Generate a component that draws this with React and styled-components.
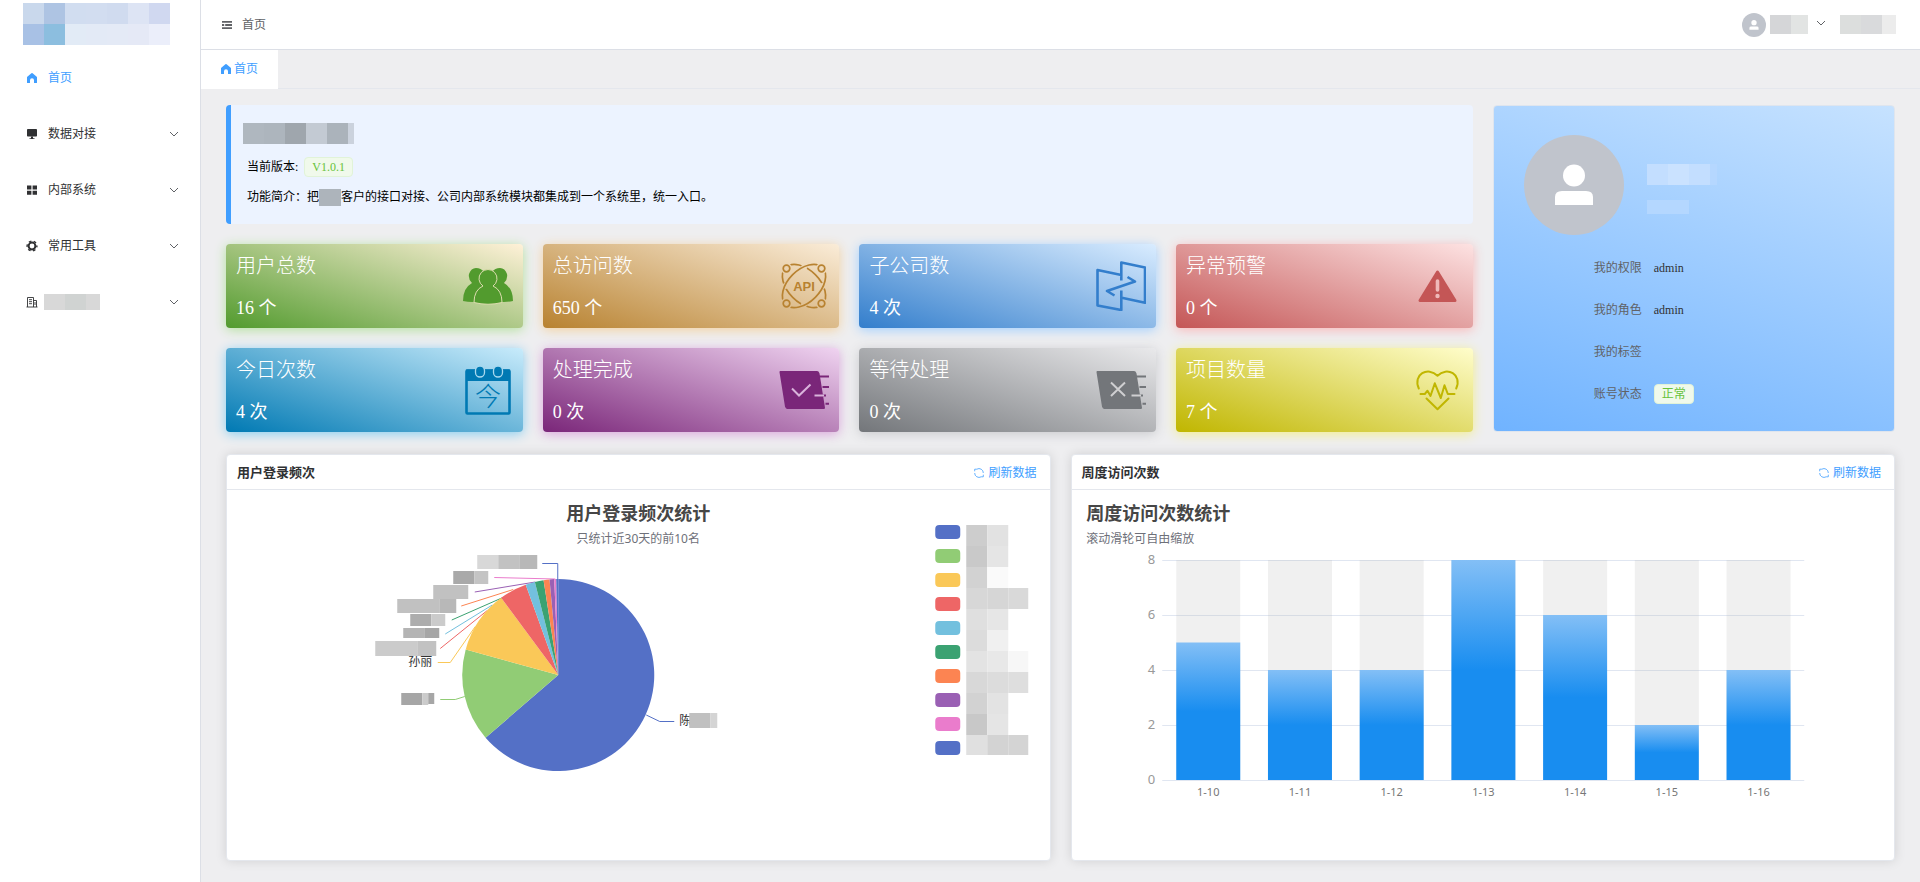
import React from 'react';
import styled, { createGlobalStyle } from 'styled-components';

const GlobalStyle = createGlobalStyle`
  * {
    box-sizing: border-box;
  }
  body {
    margin: 0;
    background: #eeeef0;
    color: #303133;
    font-family: "Liberation Serif", "Noto Sans CJK SC", serif;
    font-size: 12px;
    line-height: 20px;
  }
`;

const StyledLayout = styled.div`
  display: flex;
  min-height: 100vh;
`;

const StyledSidebar = styled.aside`
  flex: 0 0 201px;
  background: #fff;
  border-right: 1px solid #dcdfe6;
`;

const StyledLogo = styled.div`
  display: flex;
  padding: 3px 0 5px 23px;
`;

const StyledMenuItem = styled.a`
  display: flex;
  align-items: center;
  gap: 10px;
  height: 56px;
  padding: 0 20px 0 26px;
  color: ${props => (props.$active ? '#409eff' : '#303133')};
  text-decoration: none;

  svg:nth-child(3) {
    margin-left: auto;
  }
`;

const StyledMenuLabel = styled.span`
  display: flex;
  margin-left: ${props => (props.$masked ? '-4px' : '0')};
`;

const StyledIcon = styled.svg`
  display: block;
  flex: none;
  width: ${props => props.$size || 12}px;
  height: ${props => props.$size || 12}px;
`;

const StyledPage = styled.div`
  flex: 1;
  min-width: 0;
`;

const StyledHeader = styled.header`
  display: flex;
  align-items: center;
  gap: 9px;
  height: 50px;
  padding: 0 24px 0 20px;
  background: #fff;
  border-bottom: 1px solid #dcdfe6;
  color: #606266;
`;

const StyledUser = styled.div`
  display: flex;
  align-items: center;
  gap: 4px;
  margin-left: auto;
`;

const StyledArrow = styled.span`
  padding: 0 9px 4px 3px;
`;

const StyledAvatar = styled.div`
  display: flex;
  flex: none;
  align-items: center;
  justify-content: center;
  width: ${props => props.$size}px;
  height: ${props => props.$size}px;
  border-radius: 50%;
  background: #c0c4cc;
`;

const StyledTabs = styled.nav`
  display: flex;
  height: 39px;
  border-bottom: 1px solid #e4e7ed;
`;

const StyledTab = styled.a`
  display: flex;
  align-items: center;
  gap: 2px;
  height: 39px;
  padding: 0 20px 2px 19px;
  background: #fff;
  color: #409eff;
  text-decoration: none;
`;

const StyledMain = styled.main`
  padding: 16px 25px 21px;
`;

const StyledOverview = styled.div`
  display: grid;
  grid-template-columns: 1fr calc(25% - 15px);
  gap: 20px;
`;

const StyledInfo = styled.section`
  padding: 18px 12px 17px;
  margin-bottom: 20px;
  border-left: 5px solid #409eff;
  border-radius: 4px;
  background: #ecf3ff;
  color: #000;
`;

const StyledInfoName = styled.div`
  display: flex;
`;

const StyledInfoRow = styled.div`
  display: flex;
  align-items: center;
  height: 20px;
  margin: ${props => props.$top}px 0 0 4px;
`;

const StyledTag = styled.span`
  height: 20px;
  padding: 0 7px;
  border: 1px solid #e1f3d8;
  border-radius: 4px;
  background: #f0f9eb;
  color: #67c23a;
  line-height: 18px;

  ${StyledInfoRow} & {
    margin-left: 6px;
  }
`;

const StyledStats = styled.div`
  display: grid;
  grid-template-columns: repeat(4, 1fr);
  gap: 20px;
`;

const StyledStat = styled.section`
  display: flex;
  align-items: center;
  justify-content: space-between;
  height: 84px;
  padding: 0 10px;
  border-radius: 4px;
  background: linear-gradient(18deg, ${props => props.$from}, ${props => props.$to});
  box-shadow: 0 2px 12px ${props => props.$glow};
  color: #fff;
`;

const StyledStatText = styled.div`
  padding-top: 2px;
`;

const StyledStatTitle = styled.h3`
  margin: 0 0 18px;
  font-size: 20px;
  font-weight: 300;
  line-height: 24px;
`;

const StyledStatValue = styled.p`
  margin: 0;
  font-size: 18px;
  line-height: 24px;
`;

const StyledProfile = styled.section`
  padding: 29px 30px 16px;
  border: 1px solid #dfe5ee;
  border-radius: 4px;
  background: linear-gradient(18deg, #70b3ff, #c6e2ff);
`;

const StyledProfileTop = styled.div`
  display: flex;
  align-items: center;
  gap: 23px;
`;

const StyledProfileName = styled.div`
  display: flex;
  flex-direction: column;
  gap: 15px;
  padding-top: 8px;
`;

const StyledProfileList = styled.dl`
  display: grid;
  grid-template-columns: 118px 1fr;
  grid-auto-rows: 42px;
  column-gap: 12px;
  align-items: center;
  margin: 12px 0 0;

  dt {
    color: #606266;
    text-align: right;
  }
  dd {
    display: flex;
    margin: 0;
  }
`;

const StyledCharts = styled.div`
  display: grid;
  grid-template-columns: 1fr 1fr;
  gap: 20px;
  margin-top: 22px;
`;

const StyledPanel = styled.section`
  min-width: 0;
  border: 1px solid #e4e7ed;
  border-radius: 4px;
  background: #fff;
  box-shadow: 0 0 12px rgba(0, 0, 0, 0.12);
`;

const StyledPanelHeader = styled.div`
  display: flex;
  align-items: center;
  justify-content: space-between;
  height: 35px;
  padding: 2px 13px 0 10px;
  border-bottom: 1px solid #e4e7ed;
`;

const StyledPanelTitle = styled.h2`
  margin: 0;
  font-size: 13px;
  font-weight: 700;
`;

const StyledRefresh = styled.button`
  display: flex;
  align-items: center;
  gap: 3px;
  padding: 0;
  border: 0;
  background: none;
  color: #409eff;
  font: inherit;
  cursor: pointer;
`;

const StyledPanelBody = styled.div`
  padding: 10px;
`;

const StyledChart = styled.svg`
  display: block;
  width: 100%;
  height: 350px;
  font-family: "Noto Sans", "Noto Sans CJK SC", sans-serif;
  font-size: 12px;

  .title {
    fill: #464646;
    font-size: 18px;
    font-weight: 700;
  }
  .subtitle {
    fill: #6e7079;
  }
  .value {
    fill: #999;
    font-size: 13px;
    text-anchor: end;
  }
  .day {
    fill: #777;
    font-size: 11px;
    text-anchor: middle;
  }
`;

const StyledMosaic = styled.span`
  display: inline-grid;
  flex: none;
  grid-template-columns: ${props => props.$columns};
  grid-auto-rows: ${props => props.$row}px;
  margin: 0 ${props => props.$margin || 0}px;
`;

const StyledMosaicCell = styled.i`
  background: ${props => props.$color};
`;

const Mosaic = ({ columns, row, colors, margin }) => (
  <StyledMosaic $columns={columns} $row={row} $margin={margin} aria-hidden="true">
    {colors.map((color, index) => (
      <StyledMosaicCell key={index} $color={color} />
    ))}
  </StyledMosaic>
);

const HomeIcon = () => (
  <StyledIcon viewBox="0 0 12 12" fill="currentColor">
    <path d="M5.4 1.3q.6-.5 1.2 0L11 5v5.500q0 .5-.5.5H8V8.200a2 2 0 0 0-4 0V11H1.500Q1 11 1 10.500V5z" />
  </StyledIcon>
);

const MonitorIcon = () => (
  <StyledIcon viewBox="0 0 12 12" fill="currentColor">
    <rect x="1" y="1" width="10" height="7.600" rx="0.800" />
    <path d="M5 8.600h2v1.600h1.500v.8h-5v-.8H5z" />
  </StyledIcon>
);

const MenuIcon = () => (
  <StyledIcon viewBox="0 0 12 12" fill="currentColor">
    <path d="M1 1.500h4.400v4H1zM6.600 1.500H11v4H6.600zM1 6.700h4.400v4H1zM6.600 6.700H11v4H6.600z" />
  </StyledIcon>
);

const ToolIcon = () => (
  <StyledIcon viewBox="0 0 12 12" fill="none" stroke="currentColor">
    <circle cx="6" cy="6" r="3.400" strokeWidth="2" />
    <circle cx="6" cy="6" r="4.900" strokeWidth="1.400" strokeDasharray="2.600 2.530" strokeDashoffset="1.300" />
  </StyledIcon>
);

const OfficeIcon = () => (
  <StyledIcon viewBox="0 0 12 12" fill="none" stroke="currentColor" strokeWidth="0.900">
    <path d="M1.500 11V1.500h6V11M7.500 4.500h3V11M.5 11h11M3 3.700h3M3 5.700h3M3 7.700h3M9 6v3" />
  </StyledIcon>
);

const FoldIcon = () => (
  <StyledIcon viewBox="0 0 12 12" fill="currentColor">
    <path d="M1 2h10v1.800H1zM1 5.100h2.200v1.800H1zM4.200 5.100H11v1.800H4.200zM1 8.200h10V10H1z" />
  </StyledIcon>
);

const ChevronIcon = () => (
  <StyledIcon viewBox="0 0 12 12" fill="none" stroke="#606266">
    <path d="M2 4l4 4 4-4" />
  </StyledIcon>
);

const RefreshIcon = () => (
  <StyledIcon viewBox="0 0 12 12" fill="none" stroke="currentColor" strokeWidth="0.800">
    <path d="M3.800 2.200A4.300 4.300 0 0 1 10.300 6M1.700 6a4.300 4.300 0 0 0 6.500 3.800M1.700 4.300V2.200h2.100M10.300 7.700v2.100H8.200" />
  </StyledIcon>
);

const UserIcon = ({ size }) => (
  <StyledIcon $size={size} viewBox="0 0 50 50" fill="#fff">
    <circle cx="25" cy="15.500" r="11" />
    <path d="M6 45v-8q0-6 7-6h24q7 0 7 6v8z" />
  </StyledIcon>
);

const UsersArt = () => (
  <g fill="#529b2e">
    <path d="M0 40Q0 27 9 22 5 18 6 13q2-6 7-6t8 4L19 40Q9 42 0 40zM50 40q0-13-9-18 4-4 3-9-2-6-7-6t-8 4l2 29q10 2 19 0z" />
    <path
      d="M11 41.500Q11 29 20 25a9 9 0 1 1 10 0q9 4 9 16.500Q25 45 11 41.500z"
      stroke="#dcdcae"
    />
  </g>
);

const ApiArt = () => (
  <g fill="none" stroke="#b88230" strokeWidth="1.700">
    <mask id="api-ends" maskUnits="userSpaceOnUse" x="0" y="0" width="50" height="50">
      <rect width="50" height="50" fill="#fff" stroke="none" />
      <g fill="#000" stroke="none">
        <circle cx="7.500" cy="7.500" r="5.500" />
        <circle cx="42.500" cy="7.500" r="5.500" />
        <circle cx="7.500" cy="42.500" r="5.500" />
        <circle cx="42.500" cy="42.500" r="5.500" />
      </g>
    </mask>
    <mask id="api-cross" maskUnits="userSpaceOnUse" x="0" y="0" width="50" height="50">
      <rect width="50" height="50" fill="#fff" stroke="none" />
      <g fill="#000" stroke="none">
        <circle cx="25" cy="6.500" r="3" />
        <circle cx="25" cy="43.500" r="3" />
        <circle cx="6.500" cy="25" r="3" />
        <circle cx="43.500" cy="25" r="3" />
      </g>
    </mask>
    <g mask="url(#api-ends)">
      <ellipse cx="25" cy="25" rx="26" ry="16" transform="rotate(-45 25 25)" />
      <g mask="url(#api-cross)">
        <ellipse cx="25" cy="25" rx="26" ry="16" transform="rotate(45 25 25)" />
      </g>
    </g>
    <circle cx="7.500" cy="7.500" r="3.300" />
    <circle cx="42.500" cy="7.500" r="3.300" />
    <circle cx="7.500" cy="42.500" r="3.300" />
    <circle cx="42.500" cy="42.500" r="3.300" />
    <text
      x="25"
      y="30"
      fill="#b88230"
      stroke="none"
      textAnchor="middle"
      fontFamily="Liberation Sans, sans-serif"
      fontSize="13"
      fontWeight="700"
    >
      API
    </text>
  </g>
);

const CompanyArt = () => (
  <g fill="none" stroke="#337ecc" strokeWidth="2.600" strokeLinejoin="round">
    <path d="M25.300 14 1.500 9v35.500l23.800 4.500V29.500M25.300 19.500V1.500l23.700 5v35.300l-23.200-5" />
    <path d="M31.500 16l7.500 4.500L11 30l7.500 4.500" />
  </g>
);

const WarningArt = () => (
  <g>
    <path
      d="M24.500 11 7 39.500h35z"
      fill="#c45656"
      stroke="#c45656"
      strokeWidth="3"
      strokeLinejoin="round"
    />
    <path d="M24.500 20v9" stroke="#efb9b9" strokeWidth="3.600" strokeLinecap="round" />
    <circle cx="24.500" cy="35" r="2.200" fill="#efb9b9" />
  </g>
);

const TodayArt = () => (
  <g fill="none" stroke="#0079b3">
    <rect x="3.500" y="5.500" width="43" height="43" rx="1" strokeWidth="2.600" />
    <path d="M3 4.500h44V16H3z" fill="#0079b3" stroke="none" />
    <rect x="12.500" y="1" width="9" height="11" rx="4.500" fill="#0079b3" stroke="#a9d9ef" strokeWidth="1.300" />
    <rect x="30.500" y="1" width="9" height="11" rx="4.500" fill="#0079b3" stroke="#a9d9ef" strokeWidth="1.300" />
    <text
      x="25"
      y="41"
      fill="#0079b3"
      stroke="none"
      textAnchor="middle"
      fontFamily="Noto Sans CJK SC, sans-serif"
      fontSize="26"
      fontWeight="300"
    >
      今
    </text>
  </g>
);

const BookArt = ({ color, light, done }) => (
  <g fill="none" stroke={color} strokeWidth="2">
    <path d="M1.500 7h36.500q1 0 1.500 1.500L45 43H8.500q-1 0-1.500-1.500z" fill={color} strokeLinejoin="round" />
    <path d="M40 11.500h10M43.500 22h6.500M44 30.500h3M46.500 38.700H50" />
    <path d="M35.500 30.500H45" stroke={light} />
    <path d={done ? 'M13 23.500l7 7L31.500 19.500' : 'M15 17.500 29 31M29 17.500 15 31'} stroke={light} />
  </g>
);

const HeartArt = () => (
  <g fill="none" stroke="#c0b600" strokeWidth="2" strokeLinecap="round" strokeLinejoin="round">
    <path d="M5.800 23.500C-.5 9.500 15 1 24.500 10.700 34 1 49.500 9.500 43.200 23.500" />
    <path d="M7.500 29h4.300l2.700-3.300 3 5.300 4.300-12.700L27.800 33l3.700-12.700 3.300 8.700h6.700" />
    <path d="M13.500 33.500l11 10.800 11-10.800" />
  </g>
);

const stats = [
  { title: '用户总数', value: '16 个', from: '#529b2e', to: '#fff1d8', glow: '#b3e19d', art: <UsersArt /> },
  { title: '总访问数', value: '650 个', from: '#b88230', to: '#faecd8', glow: '#f3d19e', art: <ApiArt /> },
  { title: '子公司数', value: '4 次', from: '#337ecc', to: '#d9ecff', glow: '#a0cfff', art: <CompanyArt /> },
  { title: '异常预警', value: '0 个', from: '#c45656', to: '#fde2e2', glow: '#fab6b6', art: <WarningArt /> },
  { title: '今日次数', value: '4 次', from: '#0079b3', to: '#c8ebfb', glow: '#86cdf0', art: <TodayArt /> },
  {
    title: '处理完成',
    value: '0 次',
    from: '#7a2679',
    to: '#efd3f0',
    glow: '#d9a3da',
    art: <BookArt color="#7a2679" light="#d9b3db" done />,
  },
  {
    title: '等待处理',
    value: '0 次',
    from: '#73767a',
    to: '#e9e9eb',
    glow: '#c8c9cc',
    art: <BookArt color="#73767a" light="#cfcfd1" />,
  },
  { title: '项目数量', value: '7 个', from: '#c0b600', to: '#fffdcb', glow: '#f3ee8a', art: <HeartArt /> },
];

const menus = [
  { label: '首页', icon: <HomeIcon />, active: true },
  { label: '数据对接', icon: <MonitorIcon />, children: true },
  { label: '内部系统', icon: <MenuIcon />, children: true },
  { label: '常用工具', icon: <ToolIcon />, children: true },
  { icon: <OfficeIcon />, children: true },
];

// end = clockwise angle at which the slice stops
const slices = [
  { color: '#5470c6', end: 229.2, line: '409,215 422.500,221.500 437,221.500' },
  { color: '#91cc75', end: 285.4, line: '203,199.500 218,199.500 227.500,196.500' },
  { color: '#fac858', end: 323.5, line: '200.500,162.500 213,162.500 238,126.500' },
  { color: '#ee6666', end: 340.2, line: '203,148.500 250,110.500' },
  { color: '#73c0de', end: 345.9, line: '208,134 255,105' },
  { color: '#3ba272', end: 351.2, line: '214.500,120 264.500,98' },
  { color: '#fc8452', end: 354.8, line: '224,106 276,89.500' },
  { color: '#9a60b4', end: 357.6, line: '237.500,92 298,82' },
  { color: '#ea7ccc', end: 358.8, line: '257,77.500 318,79' },
  { color: '#5470c6', end: 360, line: '305,63.500 320.500,63.500 320.500,79' },
];

const pieLabels = [
  [240, 55, 21, 14, '#d8d8d8'],
  [261, 55, 21, 14, '#c2c2c2'],
  [282, 55, 18, 14, '#b8b8b8'],
  [216, 71, 21, 13, '#a9a9a9'],
  [237, 71, 14, 13, '#c4c4c4'],
  [196, 85, 35, 14, '#c1c1c1'],
  [160, 99, 42, 14, '#c1c1c1'],
  [202, 99, 17, 14, '#b8b8b8'],
  [173, 114, 21, 12, '#adadad'],
  [194, 114, 14, 12, '#cbcbcb'],
  [166, 128, 21, 10, '#b4b4b4'],
  [187, 128, 15, 10, '#a6a6a6'],
  [138, 141, 42, 15, '#cbcbcb'],
  [180, 141, 19, 15, '#c2c2c2'],
  [164, 193, 21, 12, '#a6a6a6'],
  [185, 193, 6, 12, '#cbcbcb'],
  [191, 193, 6, 11, '#a6a6a6'],
  [452, 213, 21, 15, '#c0c0c0'],
  [473, 213, 7, 15, '#d4d4d4'],
];

const legendLabels = [
  ['#cdcdcd', '#e2e2e2'],
  ['#c9c9c9', '#e5e5e5'],
  ['#d2d2d2', '#fafafa'],
  ['#d7d7d7', '#d6d6d6', '#d9d9d9'],
  ['#dfdfdf', '#e6e6e6'],
  ['#dcdcdc', '#f0f0f0'],
  ['#e3e3e3', '#e8e8e8', '#f7f7f7'],
  ['#d8d8d8', '#dcdcdc', '#dedede'],
  ['#d2d2d2', '#e3e3e3'],
  ['#c8c8c8', '#e5e5e5'],
  ['#e0e0e0', '#d3d3d3', '#d4d4d4'],
];

const visits = [
  { day: '1-10', count: 5 },
  { day: '1-11', count: 4 },
  { day: '1-12', count: 4 },
  { day: '1-13', count: 8 },
  { day: '1-14', count: 6 },
  { day: '1-15', count: 2 },
  { day: '1-16', count: 4 },
];

const piePoint = angle => {
  const rad = (angle * Math.PI) / 180;
  return `${321 + 96 * Math.sin(rad)} ${175 - 96 * Math.cos(rad)}`;
};

const LoginChart = () => (
  <StyledChart viewBox="0 0 802 350" role="img" aria-label="用户登录频次统计">
    <text className="title" x="401" y="20" textAnchor="middle">用户登录频次统计</text>
    <text className="subtitle" x="401" y="43" textAnchor="middle">只统计近30天的前10名</text>
    {slices.map((slice, index) => (
      <polyline key={index} points={slice.line} fill="none" stroke={slice.color} />
    ))}
    {slices.map((slice, index) => {
      const start = index === 0 ? 0 : slices[index - 1].end;
      const large = slice.end - start > 180 ? 1 : 0;
      return (
        <path
          key={index}
          d={`M321 175L${piePoint(start)}A96 96 0 ${large} 1 ${piePoint(slice.end)}z`}
          fill={slice.color}
        />
      );
    })}
    <text x="171" y="166" fill="#333">孙丽</text>
    <text x="442" y="225" fill="#333">陈</text>
    {pieLabels.map(([x, y, width, height, fill]) => (
      <rect key={`${x}-${y}`} x={x} y={y} width={width} height={height} fill={fill} />
    ))}
    {slices.map((slice, index) => (
      <rect key={index} x="698" y={25 + index * 24} width="25" height="14" rx="4" fill={slice.color} />
    ))}
    {legendLabels.map((row, y) =>
      row.map((fill, x) => (
        <rect
          key={`${x}-${y}`}
          x={729 + x * 21}
          y={25 + y * 21}
          width={x === 2 ? 20 : 21}
          height={y === 10 ? 20 : 21}
          fill={fill}
        />
      )),
    )}
  </StyledChart>
);

const VisitChart = () => {
  const band = 642 / visits.length;

  return (
    <StyledChart viewBox="0 0 802 350" role="img" aria-label="周度访问次数统计">
      <defs>
        <linearGradient id="visit-bar" x1="0" y1="0" x2="0" y2="1">
          <stop offset="0" stopColor="#83bff6" />
          <stop offset="0.5" stopColor="#188df0" />
          <stop offset="1" stopColor="#188df0" />
        </linearGradient>
      </defs>
      <text className="title" x="4" y="20">周度访问次数统计</text>
      <text className="subtitle" x="4" y="43">滚动滑轮可自由缩放</text>
      {[8, 6, 4, 2, 0].map((value, index) => (
        <g key={value}>
          <path d={`M80 ${60.5 + index * 55}h642`} stroke="#e0e6f1" />
          <text className="value" x="73" y={64 + index * 55}>{value}</text>
        </g>
      ))}
      {visits.map((item, index) => {
        const x = 80 + band * index + 14;
        const height = item.count * 27.5;
        return (
          <g key={item.day}>
            <rect x={x} y="60" width="64" height="220" fill="rgba(180, 180, 180, 0.2)" />
            <rect x={x} y={280 - height} width="64" height={height} fill="url(#visit-bar)" />
            <text className="day" x={x + 32} y="296">{item.day}</text>
          </g>
        );
      })}
    </StyledChart>
  );
};

const Panel = ({ title, children }) => (
  <StyledPanel>
    <StyledPanelHeader>
      <StyledPanelTitle>{title}</StyledPanelTitle>
      <StyledRefresh type="button">
        <RefreshIcon />
        刷新数据
      </StyledRefresh>
    </StyledPanelHeader>
    <StyledPanelBody>{children}</StyledPanelBody>
  </StyledPanel>
);

const Sidebar = () => (
  <StyledSidebar>
    <StyledLogo>
      <Mosaic
        columns="repeat(7, 21px)"
        row={21}
        colors={[
          '#c9d8ec', '#aec4e3', '#d1ddf0', '#d2ddf0', '#d0dbef', '#dde4f4', '#d0d8f0',
          '#a8c1e5', '#8cbedf', '#e2ebf6', '#e3eaf6', '#e4eaf6', '#e5e9f6', '#ebeefa',
        ]}
      />
    </StyledLogo>
    <nav>
      {menus.map((menu, index) => (
        <StyledMenuItem key={index} href="#" $active={menu.active}>
          {menu.icon}
          <StyledMenuLabel $masked={!menu.label}>
            {menu.label || (
              <Mosaic columns="21px 21px 14px" row={16} colors={['#d8d8d8', '#d0d3d2', '#d8d8d8']} />
            )}
          </StyledMenuLabel>
          {menu.children && <ChevronIcon />}
        </StyledMenuItem>
      ))}
    </nav>
  </StyledSidebar>
);

const Header = () => (
  <StyledHeader>
    <FoldIcon />
    <span>首页</span>
    <StyledUser>
      <StyledAvatar $size={24}>
        <UserIcon size={12} />
      </StyledAvatar>
      <Mosaic columns="21px 17px" row={19} colors={['#d5d6d8', '#e2e4e3']} />
      <StyledArrow>
        <ChevronIcon />
      </StyledArrow>
      <Mosaic columns="21px 21px 14px" row={19} colors={['#dcdedd', '#d9dadc', '#ececec']} />
    </StyledUser>
  </StyledHeader>
);

const Info = () => (
  <StyledInfo>
    <StyledInfoName>
      <Mosaic
        columns="21px 21px 21px 21px 21px 6px"
        row={21}
        colors={['#afb7bf', '#adb5bd', '#9fa6ad', '#c3cad3', '#abb3bb', '#cbd2dd']}
      />
    </StyledInfoName>
    <StyledInfoRow $top={13}>
      当前版本:
      <StyledTag>V1.0.1</StyledTag>
    </StyledInfoRow>
    <StyledInfoRow $top={10}>
      功能简介：把
      <Mosaic columns="22px" row={17} colors={['#adb4bb']} />
      客户的接口对接、公司内部系统模块都集成到一个系统里，统一入口。
    </StyledInfoRow>
  </StyledInfo>
);

const Profile = () => (
  <StyledProfile>
    <StyledProfileTop>
      <StyledAvatar $size={100}>
        <UserIcon size={50} />
      </StyledAvatar>
      <StyledProfileName>
        <Mosaic
          columns="21px 21px 21px 7px"
          row={21}
          colors={['#c3deff', '#cae2ff', '#c3deff', '#b5d7ff']}
        />
        <Mosaic columns="42px" row={14} colors={['#b4d7ff']} />
      </StyledProfileName>
    </StyledProfileTop>
    <StyledProfileList>
      <dt>我的权限</dt>
      <dd>admin</dd>
      <dt>我的角色</dt>
      <dd>admin</dd>
      <dt>我的标签</dt>
      <dd />
      <dt>账号状态</dt>
      <dd>
        <StyledTag>正常</StyledTag>
      </dd>
    </StyledProfileList>
  </StyledProfile>
);

const App = () => (
  <StyledLayout>
    <GlobalStyle />
    <Sidebar />
    <StyledPage>
      <Header />
      <StyledTabs>
        <StyledTab href="#">
          <HomeIcon />
          首页
        </StyledTab>
      </StyledTabs>
      <StyledMain>
        <StyledOverview>
          <div>
            <Info />
            <StyledStats>
              {stats.map(item => (
                <StyledStat key={item.title} $from={item.from} $to={item.to} $glow={item.glow}>
                  <StyledStatText>
                    <StyledStatTitle>{item.title}</StyledStatTitle>
                    <StyledStatValue>{item.value}</StyledStatValue>
                  </StyledStatText>
                  <StyledIcon $size={50} viewBox="0 0 50 50" aria-hidden="true">
                    {item.art}
                  </StyledIcon>
                </StyledStat>
              ))}
            </StyledStats>
          </div>
          <Profile />
        </StyledOverview>
        <StyledCharts>
          <Panel title="用户登录频次">
            <LoginChart />
          </Panel>
          <Panel title="周度访问次数">
            <VisitChart />
          </Panel>
        </StyledCharts>
      </StyledMain>
    </StyledPage>
  </StyledLayout>
);

export default App;
